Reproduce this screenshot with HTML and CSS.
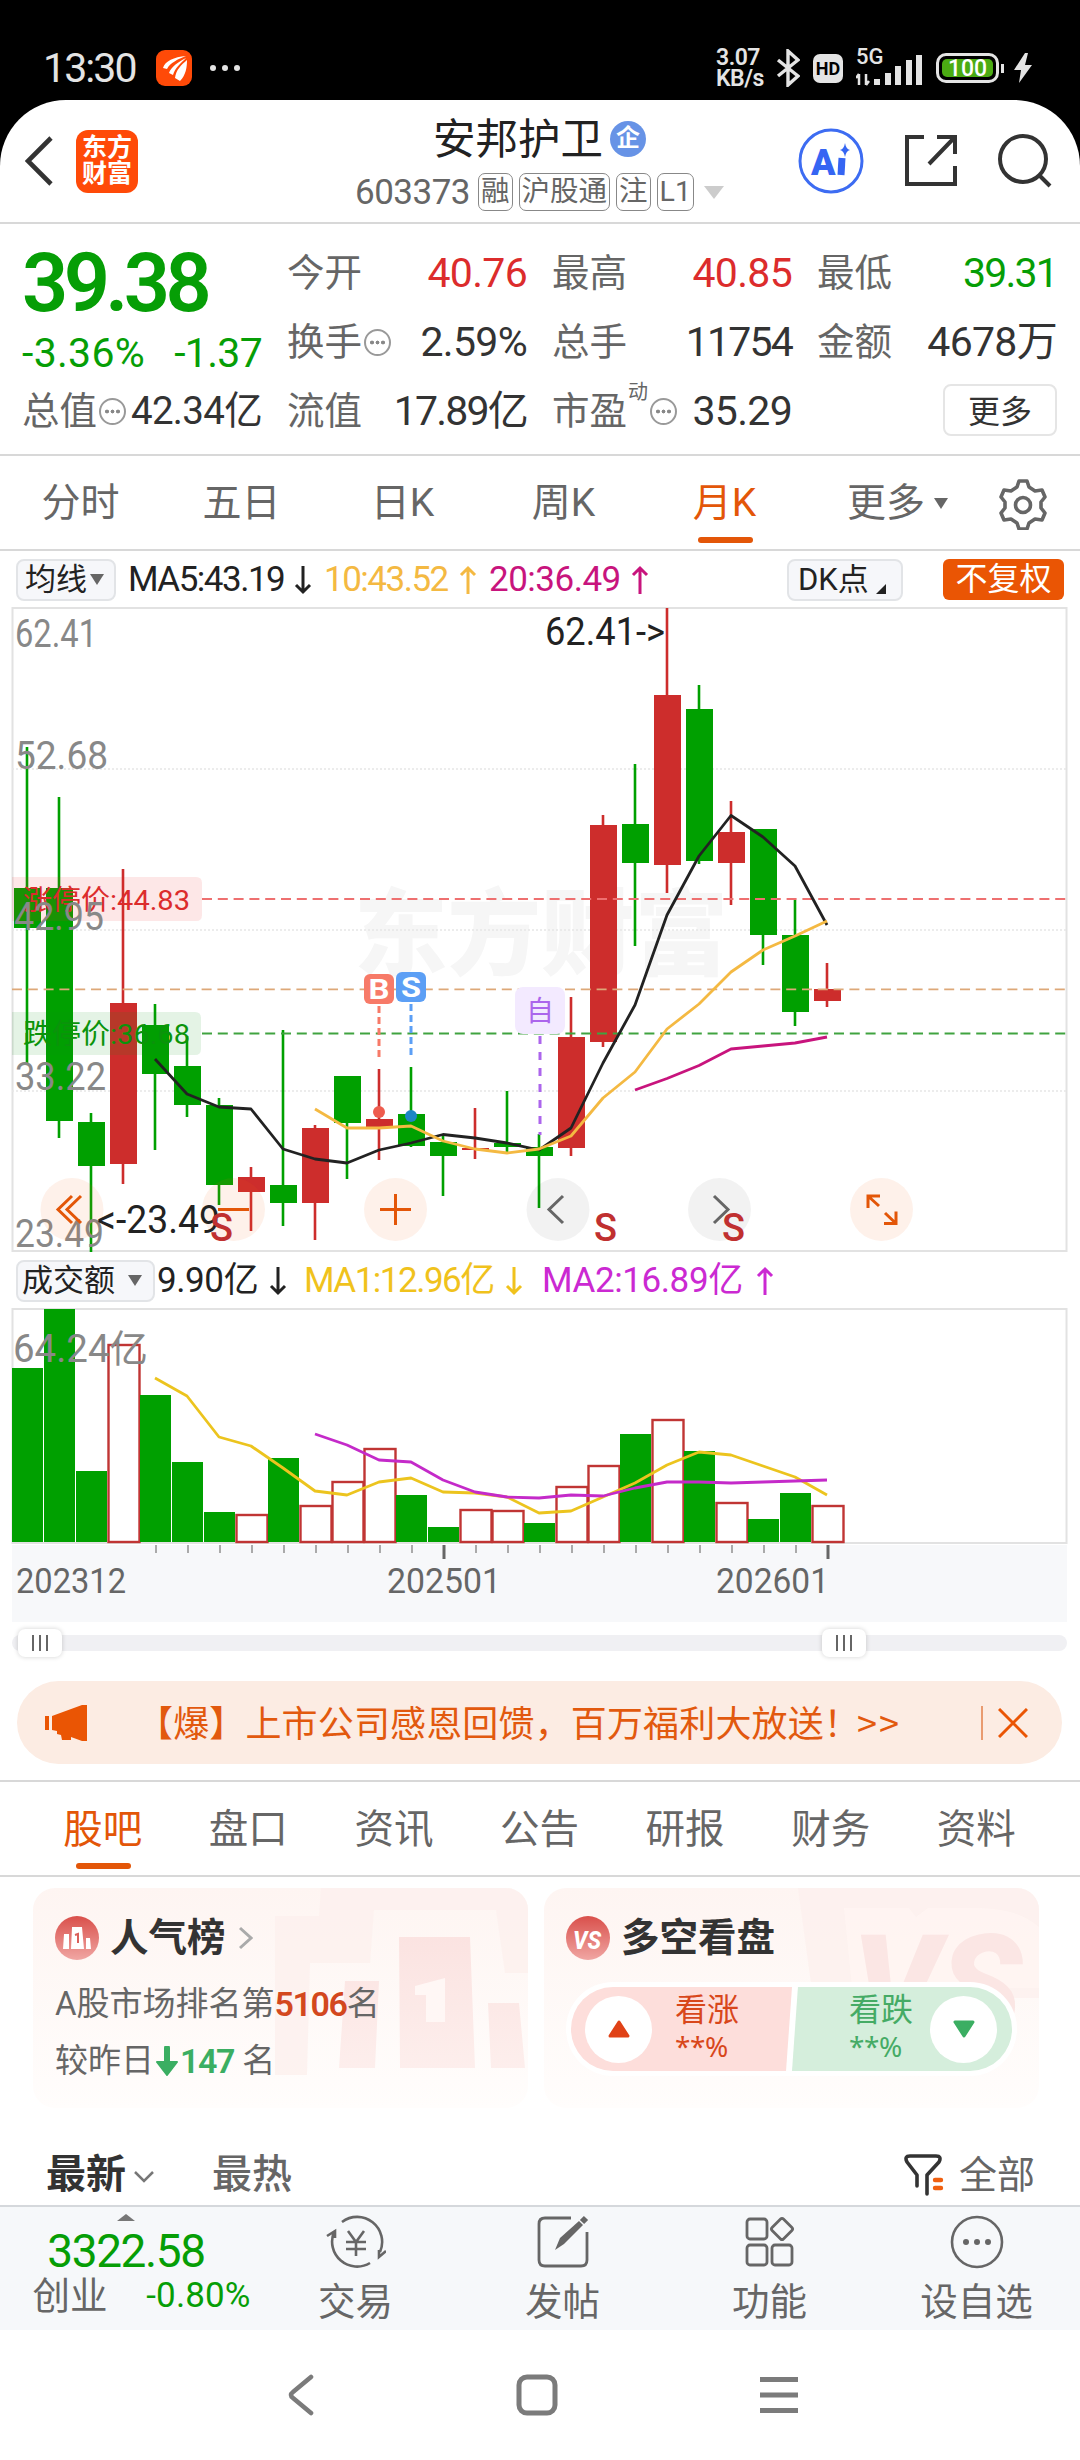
FILE: index.html
```html
<!DOCTYPE html>
<html lang="zh-CN">
<head>
    <meta charset="UTF-8">
    <meta name="viewport" content="width=device-width, initial-scale=1.0">
    <title>安邦护卫 603373</title>
    <link rel="stylesheet" href="styles.css">
</head>
<body>
    <!-- 状态栏 -->
    <div class="status">
        <span class="clock">13:30</span>
        <svg class="app-dot" width="36" height="36" viewBox="0 0 36 36"><rect width="36" height="36" rx="9" fill="#ff4a08"/><path d="M30 6C18 7 9 11 7 18l4 1C14 13 22 9 30 6zM30 8C22 12 15 17 13 23l4 2C19 18 25 13 30 8zM31 10C25 15 20 20 19 28l5 3C30 25 31 17 31 10z" fill="#fff"/></svg>
        <svg class="more-dots" width="32" height="8" viewBox="0 0 32 8" fill="#e4e4e4"><circle cx="4" cy="4" r="3"/><circle cx="16" cy="4" r="3"/><circle cx="28" cy="4" r="3"/></svg>
        <div class="status-right">
            <div class="speed"><span>3.07</span><span>KB/s</span></div>
            <svg class="bt" width="24" height="38" viewBox="0 0 24 38" fill="none" stroke="#e4e4e4" stroke-width="3.4"><path d="M2 11l20 16-10 9V2l10 9L2 27"/></svg>
            <span class="hd">HD</span>
            <div class="signal">
                <span class="net">5G</span>
                <svg width="66" height="36" viewBox="0 0 66 36"><path d="M3 35V24m0 0l-3 4M10 24v11m0 0l3-4" stroke="#e4e4e4" stroke-width="2.5" fill="none"/><path d="M18 29h6v6h-6zM29 23h6v12h-6zM39 16h6v19h-6zM50 10h6v25h-6zM60 5h6v30h-6z" fill="#e4e4e4"/></svg>
            </div>
            <div class="battery"><span>100</span></div>
            <svg class="bolt" width="18" height="30" viewBox="0 0 18 30"><path d="M11 0L0 17h7l-2 13L18 12h-7l3-12z" fill="#e4e4e4"/></svg>
        </div>
    </div>

    <div class="page">
        <!-- 顶部标题 -->
        <header class="header">
            <svg class="back" width="28" height="50" viewBox="0 0 28 50" fill="none" stroke="#333" stroke-width="4.6"><path d="M26 2L3 25l23 23"/></svg>
            <div class="logo">东方<br>财富</div>
            <div class="title">
                <div class="name">安邦护卫<span class="badge-qi">企</span></div>
                <div class="code"><span class="num">603373</span><i>融</i><i>沪股通</i><i>注</i><i>L1</i><b class="tri"></b></div>
            </div>
            <div class="header-icons">
                <svg width="66" height="66" viewBox="0 0 66 66"><circle cx="33" cy="33" r="31" fill="none" stroke="#3d6cf2" stroke-width="3"/><text x="13" y="47" class="ai">A</text><path d="M44 30l-1 17" stroke="#3565f3" stroke-width="7"/><path d="M47 15q1 6 5 7-4 1-5 7-1-6-5-7 4-1 5-7z" fill="#3565f3"/></svg>
                <svg width="54" height="54" viewBox="0 0 54 54" fill="none" stroke="#333" stroke-width="4"><path d="M20 3H3v47h48V32M33 3h18v17M51 3L25 30"/></svg>
                <svg width="54" height="54" viewBox="0 0 54 54" fill="none" stroke="#333" stroke-width="4"><circle cx="25" cy="25" r="23"/><path d="M42 42l10 10"/></svg>
            </div>
        </header>

        <!-- 行情 -->
        <section class="quote">
            <div class="quote-main">
                <div class="price green">39.38</div>
                <div class="change green"><span class="rate">-3.36%</span><span>-1.37</span></div>
                <div class="cell"><span class="lb">总值</span><b class="info"></b><span class="v">42.34亿</span></div>
            </div>
            <div class="quote-col">
                <div class="cell"><span class="lb">今开</span><span class="v red">40.76</span></div>
                <div class="cell"><span class="lb">换手</span><b class="info"></b><span class="v">2.59%</span></div>
                <div class="cell"><span class="lb">流值</span><span class="v tight">17.89亿</span></div>
            </div>
            <div class="quote-col">
                <div class="cell"><span class="lb">最高</span><span class="v red">40.85</span></div>
                <div class="cell"><span class="lb">总手</span><span class="v tight">11754</span></div>
                <div class="cell"><span class="lb">市盈</span><sup>动</sup><b class="info"></b><span class="v">35.29</span></div>
            </div>
            <div class="quote-col">
                <div class="cell"><span class="lb">最低</span><span class="v tight green">39.31</span></div>
                <div class="cell"><span class="lb">金额</span><span class="v">4678万</span></div>
                <div class="cell"><button class="more-btn">更多</button></div>
            </div>
        </section>

        <!-- 周期切换 -->
        <nav class="periods">
            <span>分时</span><span>五日</span><span>日K</span><span>周K</span><span class="on">月K</span><span class="with-arrow">更多<b></b></span>
            <svg width="48" height="52" viewBox="0 0 48 52" fill="none" stroke="#666" stroke-width="3.6" stroke-linejoin="round"><path d="M20 3h8l2 6 6 4 7-1 3 7-4 5v6l4 5-3 7-7-1-6 4-2 6h-8l-2-6-6-4-7 1-3-7 4-5v-6l-4-5 3-7 7 1 6-4z"/><circle cx="24" cy="27" r="7.5"/></svg>
        </nav>

        <!-- 均线图例 -->
        <div class="legend">
            <span class="chip chip-ma">均线<b></b></span>
            <span class="ma ma5">MA5:43.19</span><svg class="arr" viewBox="0 0 18 30"><path d="M9 1v26M2 20l7 7 7-7" stroke="#222"/></svg>
            <span class="ma ma10">10:43.52</span><svg class="arr" viewBox="0 0 18 30"><path d="M9 29V3M2 10l7-7 7 7" stroke="#f4b942"/></svg>
            <span class="ma ma20">20:36.49</span><svg class="arr" viewBox="0 0 18 30"><path d="M9 29V3M2 10l7-7 7 7" stroke="#c8147d"/></svg>
            <span class="chip chip-dk">DK点<b></b></span>
            <span class="chip-fq">不复权</span>
        </div>

        <svg id="kline" width="1080" height="646" viewBox="0 0 1080 646"></svg>

        <div class="legend legend-vol">
            <span class="chip chip-vol">成交额<b></b></span>
            <span class="ma vol">9.90亿</span><svg class="arr" viewBox="0 0 18 30"><path d="M9 1v26M2 20l7 7 7-7" stroke="#222"/></svg>
            <span class="ma vol1">MA1:12.96亿</span><svg class="arr" viewBox="0 0 18 30"><path d="M9 1v26M2 20l7 7 7-7" stroke="#f0c21c"/></svg>
            <span class="ma vol2">MA2:16.89亿</span><svg class="arr" viewBox="0 0 18 30"><path d="M9 29V3M2 10l7-7 7 7" stroke="#cb29d2"/></svg>
        </div>

        <svg id="volume" width="1080" height="316" viewBox="0 0 1080 316"></svg>

        <div class="range"><div class="track"><span class="handle"></span><span class="handle handle-end"></span></div></div>

        <!-- 公告条 -->
        <div class="banner">
            <svg width="44" height="38" viewBox="0 0 44 38" fill="#ea5504"><path d="M1 12h4v14H1zM8 12L38 1h5v36h-5l-11-4v3h-9l-1-5-4-1v-3l-5-1z"/></svg>
            <span class="banner-text">【爆】上市公司感恩回馈，百万福利大放送！<em>&gt;&gt;</em></span>
            <span class="banner-close"><svg width="30" height="30" viewBox="0 0 30 30" stroke="#ea5504" stroke-width="3"><path d="M1 1l28 28M29 1L1 29"/></svg></span>
        </div>

        <nav class="tabs">
            <span class="on">股吧</span><span>盘口</span><span>资讯</span><span>公告</span><span>研报</span><span>财务</span><span>资料</span>
        </nav>

        <section class="cards">
            <div class="card">
                <svg class="card-bg" width="496" height="220" viewBox="0 0 496 220">
                    <defs><linearGradient id="fade" x1="0" y1="0" x2="0" y2="1"><stop offset="0" stop-color="#fbe3e1"/><stop offset="1" stop-color="#fdeeec"/></linearGradient></defs>
                    <path d="M288 0h208v85h-24l-9-63H341l-4 53h-60l-3 112h-32V28h44z" fill="#fdf0ee" opacity=".8"/>
                    <path d="M361 49h76l5 131h-75l-1-131zM312 93h34l-4 87h-36zM455 115h31l6 65h-34z" fill="url(#fade)"/>
                    <path d="M382 98l30-8v44h-19v-27h-11z" fill="#fff7f5"/>
                </svg>
                <div class="card-title">
                    <svg width="44" height="44" viewBox="0 0 44 44"><defs><linearGradient id="dot" x1="0" y1="0" x2="0" y2="1"><stop offset="0" stop-color="#d9504b"/><stop offset="1" stop-color="#f0a6a3"/></linearGradient></defs><circle cx="22" cy="22" r="22" fill="url(#dot)"/><path d="M9 18h5v15H8zM17 11h10l2 22H16zM31 22h4l1 11h-5z" fill="#fff"/><path d="M20 19l3-1v9" stroke="#d9605b" stroke-width="2" fill="none"/></svg>
                    <strong>人气榜</strong>
                    <svg class="go" width="14" height="24" viewBox="0 0 14 24" fill="none" stroke="#aaa" stroke-width="3"><path d="M1 2l11 10L1 22"/></svg>
                </div>
                <p class="rank">A股市场排名第<b class="hot">5106</b>名</p>
                <p class="rank">较昨日<svg width="22" height="30" viewBox="0 0 22 30"><path d="M11 2v16" stroke="#3bae62" stroke-width="6" stroke-linecap="round"/><path d="M1 16h20L11 29z" fill="#3bae62" stroke="#3bae62" stroke-width="2" stroke-linejoin="round"/></svg><b class="down">147</b> 名</p>
            </div>
            <div class="card">
                <svg class="card-bg" width="496" height="220" viewBox="0 0 496 220">
                    <path d="M254 0h242v110H269z" fill="#fdf0ee" opacity=".8"/>
                    <path d="M300 20h65l7 9 12-9h50q40 0 62 20v60H308z" fill="#fff5f3" opacity=".8"/>
                    <text x="308" y="147" class="vs-bg" textLength="170" lengthAdjust="spacingAndGlyphs">VS</text>
                </svg>
                <div class="card-title">
                    <svg width="44" height="44" viewBox="0 0 44 44"><circle cx="22" cy="22" r="22" fill="url(#dot)"/><text x="7" y="33" class="vs" textLength="28" lengthAdjust="spacingAndGlyphs">VS</text></svg>
                    <strong>多空看盘</strong>
                </div>
                <div class="vote">
                    <div class="vote-up">
                        <span class="ball"><svg width="22" height="18" viewBox="0 0 22 18"><path d="M11 2l9 14H2z" fill="#e04217" stroke="#e04217" stroke-width="3" stroke-linejoin="round"/></svg></span>
                        <span class="vote-text">看涨<small>**%</small></span>
                    </div>
                    <div class="vote-down">
                        <span class="vote-text">看跌<small>**%</small></span>
                        <span class="ball"><svg width="22" height="18" viewBox="0 0 22 18"><path d="M11 16L2 2h18z" fill="#3bae62" stroke="#3bae62" stroke-width="3" stroke-linejoin="round"/></svg></span>
                    </div>
                </div>
            </div>
        </section>

        <div class="feed-bar">
            <strong>最新</strong>
            <svg class="chev" width="20" height="12" viewBox="0 0 20 12" fill="none" stroke="#777" stroke-width="2.5"><path d="M1 1l9 9 9-9"/></svg>
            <span class="hotest">最热</span>
            <svg class="filter" width="40" height="42" viewBox="0 0 40 42" fill="none" stroke-width="3.6" stroke-linecap="round" stroke-linejoin="round"><path d="M13 32V21L3 8q-3-6 3-6h26q6 0 3 6L23 21v19" stroke="#333"/><path d="M31 26h6M31 34h6" stroke="#f06010" stroke-width="4.4"/></svg>
            <span class="all">全部</span>
        </div>

        <!-- 底部工具栏 -->
        <footer class="toolbar">
            <div class="index">
                <b class="up-tri"></b>
                <div class="index-val green">3322.58</div>
                <div class="index-row"><span>创业</span><span class="green pct">-0.80%</span></div>
            </div>
            <div class="tool"><svg width="60" height="54" viewBox="0 0 60 54" fill="none" stroke="#666" stroke-width="2.6"><path d="M16 7a25 25 0 0 1 38 30M44 48A25 25 0 0 1 8 17M1 21l8-5 0 7M60 36l-7 6V35M22 16l8 11 8-11M30 27v14M20 27h20M20 34h20"/></svg>交易</div>
            <div class="tool"><svg width="52" height="54" viewBox="0 0 52 54" fill="none" stroke="#666" stroke-width="2.8"><path d="M34 3H8Q2 3 2 9v36q0 6 6 6h36q6 0 6-6V17"/><path d="M18 35l5-12L42 6l4 4-19 19z" fill="#666" stroke="none"/><path d="M45 7l4-4" stroke-width="6"/></svg>发帖</div>
            <div class="tool"><svg width="50" height="54" viewBox="0 0 50 54" fill="none" stroke="#666" stroke-width="2.8"><rect x="2" y="4" width="20" height="20" rx="3"/><rect x="2" y="30" width="20" height="20" rx="3"/><rect x="27" y="30" width="20" height="20" rx="3"/><rect x="29" y="6" width="16" height="16" rx="2" transform="rotate(45 37 14)"/></svg>功能</div>
            <div class="tool"><svg width="54" height="54" viewBox="0 0 54 54"><circle cx="27" cy="27" r="25" fill="none" stroke="#666" stroke-width="2.6"/><g fill="#666"><circle cx="16" cy="27" r="3"/><circle cx="27" cy="27" r="3"/><circle cx="38" cy="27" r="3"/></g></svg>设自选</div>
        </footer>

        <div class="sysnav">
            <svg width="28" height="42" viewBox="0 0 28 42" fill="none" stroke="#7b7b7b" stroke-width="4.6" stroke-linecap="round"><path d="M24 3L6 18q-4 3 0 6l18 15"/></svg>
            <svg width="42" height="42" viewBox="0 0 42 42" fill="none" stroke="#7b7b7b" stroke-width="5"><rect x="3" y="3" width="36" height="36" rx="8"/></svg>
            <svg width="40" height="38" viewBox="0 0 40 38" stroke="#7b7b7b" stroke-width="5"><path d="M1 3.5h38M1 19h38M1 34.5h38"/></svg>
        </div>
    </div>

    <script src="chart.js"></script>
</body>
</html>
```
FILE: styles.css
```css
* {
    box-sizing: border-box;
}

body {
    margin: 0;
    width: 1080px;
    background: #000;
    color: #333;
    font-family: Roboto, "Noto Sans CJK SC", sans-serif;
    font-size: 38px;
    line-height: 1;
}

svg {
    display: block;
    flex: none;
}

i, em {
    font-style: normal;
}

.green { color: #069e06; }
.red { color: #dc2c2c; }

/* 状态栏 */
.status {
    height: 100px;
    padding: 36px 48px 0 43px;
    display: flex;
    align-items: center;
    color: #e4e4e4;
}

.clock {
    width: 113px;
    font-size: 41px;
    letter-spacing: -1.9px;
}

.more-dots { margin-left: 17px; }

.status-right {
    margin-left: auto;
    display: flex;
    align-items: center;
}

.speed {
    width: 60px;
    display: flex;
    flex-direction: column;
    font-size: 23px;
    font-weight: 600;
    line-height: 21px;
    letter-spacing: -.5px;
}

.hd {
    width: 30px;
    height: 29px;
    margin: 0 13px;
    border-radius: 7px;
    background: #e4e4e4;
    color: #000;
    font-size: 18px;
    font-weight: 700;
    line-height: 30px;
    text-align: center;
}

.signal { position: relative; }

.net {
    position: absolute;
    left: 0;
    top: -4px;
    font-size: 22px;
    font-weight: 500;
}

.battery {
    position: relative;
    width: 63px;
    height: 30px;
    margin: 0 15px 0 14px;
    padding: 3px;
    border: 3px solid #e4e4e4;
    border-radius: 10px;
}

.battery span {
    display: block;
    height: 18px;
    border-radius: 5px;
    background: #4bab13;
    color: #fff;
    font-size: 23px;
    font-weight: 500;
    line-height: 19px;
    text-align: center;
}

.battery::after {
    content: "";
    position: absolute;
    right: -8px;
    top: 8px;
    width: 3px;
    height: 9px;
    background: #e4e4e4;
}

.page {
    height: 2360px;
    border-radius: 66px 66px 0 0;
    background: #fff;
    overflow: hidden;
}

/* 标题栏 */
.header {
    height: 124px;
    padding: 0 28px 0 25px;
    display: grid;
    grid-template-columns: 51px 62px 1fr 250px;
    align-items: center;
    border-bottom: 2px solid #d8d8d8;
}

.logo {
    width: 62px;
    height: 63px;
    padding-top: 5px;
    border-radius: 12px;
    background: #ff4a08;
    color: #fff;
    font-size: 25px;
    font-weight: 700;
    line-height: 26px;
    text-align: center;
}

.title {
    display: flex;
    flex-direction: column;
    align-items: center;
    padding: 14px 0 0 139px;
}

.name {
    display: flex;
    align-items: center;
    gap: 7px;
    height: 48px;
    font-size: 42.5px;
    color: #222;
}

.badge-qi {
    width: 36px;
    height: 36px;
    margin-top: -2px;
    border-radius: 50%;
    background: #6793e6;
    color: #fff;
    font-size: 24px;
    font-weight: 700;
    line-height: 34px;
    text-align: center;
}

.code {
    display: flex;
    align-items: center;
    gap: 6px;
    height: 56px;
    color: #666;
    font-size: 35px;
}

.code .num {
    letter-spacing: -.5px;
    margin-right: 2px;
}

.code i {
    height: 38px;
    padding: 0 2px;
    border: 1px solid #888;
    border-radius: 7px;
    font-size: 28.5px;
    line-height: 36px;
}

.tri {
    margin-left: 4px;
    border: 10px solid transparent;
    border-top: 13px solid #ccc;
    border-bottom: 0;
}

.header-icons {
    display: flex;
    align-items: center;
    justify-content: space-between;
    width: 254px;
    margin-left: -4px;
}

.ai {
    fill: #3565f3;
    font: 900 36px Roboto;
}

/* 行情数据 */
.quote {
    height: 232px;
    padding: 15px 25px 0 22px;
    display: grid;
    grid-template-columns: 240px 240px 240px 240px;
    column-gap: 25px;
    border-bottom: 2px solid #d8d8d8;
}

.quote-main {
    display: grid;
    grid-template-rows: 90px 48px 69px;
}

.quote-col {
    display: grid;
    grid-template-rows: 69px 69px 69px;
}

.price {
    font-size: 81px;
    font-weight: 600;
    letter-spacing: -4.6px;
    line-height: 90px;
}

.change {
    display: flex;
    justify-content: space-between;
    align-items: center;
    font-size: 41px;
    letter-spacing: -.7px;
}

.rate { letter-spacing: .3px; }

.cell {
    display: flex;
    align-items: center;
    white-space: nowrap;
}

.lb {
    color: #666;
    font-size: 37.5px;
}

.v {
    margin-left: auto;
    font-size: 41px;
    letter-spacing: -.7px;
}

.quote-col .v.tight { letter-spacing: -1.8px; }

.info {
    width: 27px;
    height: 27px;
    margin-left: 2px;
    border: 2px solid #999;
    border-radius: 50%;
    background: radial-gradient(circle at 6px 11.5px, #888 1.7px, transparent 2.2px), radial-gradient(circle at 11.5px 11.5px, #888 1.7px, transparent 2.2px), radial-gradient(circle at 17px 11.5px, #888 1.7px, transparent 2.2px);
}

sup {
    align-self: flex-start;
    margin: 5px 0 0 1px;
    color: #666;
    font-size: 20px;
}

.quote-main .v, .quote-main .lb { font-size: 37.5px; }
.quote-main .v { font-size: 38.5px; }

.more-btn {
    width: 114px;
    height: 52px;
    margin: 0 0 4px auto;
    padding: 0 0 3px;
    border: 2px solid #e5e5e5;
    border-radius: 8px;
    background: #fff;
    color: #333;
    font: 32px "Noto Sans CJK SC", sans-serif;
}

/* 周期 */
.periods {
    height: 95px;
    padding: 2px 33px 0 0;
    display: grid;
    grid-template-columns: repeat(5, 161px) 185px 1fr;
    align-items: center;
    border-bottom: 2px solid #d8d8d8;
    color: #666;
    font-size: 39px;
    text-align: center;
}

.periods svg { justify-self: end; }

.periods .on, .tabs .on {
    position: relative;
    color: #e35608;
}

.periods .on::after, .tabs .on::after {
    content: "";
    position: absolute;
    left: 50%;
    bottom: -20px;
    width: 55px;
    height: 6px;
    margin-left: -27px;
    border-radius: 3px;
    background: #e35608;
}

.with-arrow {
    display: flex;
    align-items: center;
    justify-content: center;
    gap: 9px;
}

.with-arrow b, .chip b {
    border: 7px solid transparent;
    border-top: 11px solid #666;
    border-bottom: 0;
}

/* 图例 */
.legend {
    height: 56px;
    padding: 1px 16px 0 16px;
    display: flex;
    align-items: center;
    white-space: nowrap;
}

.chip {
    height: 42px;
    padding: 0 7px;
    display: flex;
    align-items: center;
    border: 2px solid #e2e4e7;
    border-radius: 8px;
    background: #f6f7fa;
    color: #222;
    font-size: 31px;
}

.chip-ma { width: 100px; }
.chip-ma b { margin-left: 3px; }

.ma {
    margin: 0 10px 0 12px;
    font-size: 35px;
    letter-spacing: -1.5px;
    color: #222;
}

.ma5 { width: 156px; }
.ma10 { width: 126px; color: #f4b942; }

.legend .ma20 {
    width: 133px;
    color: #c8147d;
    letter-spacing: -.5px;
}

.arr {
    width: 18px;
    height: 30px;
    fill: none;
    stroke-width: 3;
}

.legend .ma10, .legend .ma20 { margin-left: 12px; margin-right: 9px; }

.chip-dk {
    width: 116px;
    margin-left: auto;
    padding-left: 9px;
}

.chip .chip-dk b, .chip-dk b {
    margin: 18px 0 0 7px;
    border: 5px solid transparent;
    border-right-color: #222;
    border-bottom: 5px solid #222;
}

.chip-fq {
    width: 121px;
    height: 41px;
    margin-left: 40px;
    border-radius: 6px;
    background: #ea5504;
    color: #fff;
    font-size: 32px;
    line-height: 40px;
    text-align: center;
}

.legend-vol { height: 55px; padding-top: 0; }
.chip-vol { width: 139px; padding-left: 4px; }
.chip-vol b { margin-left: 13px; }
.legend .vol { width: 102px; margin: 0 10px 0 2px; letter-spacing: -.4px; }
.vol1 { width: 192px; margin: 0 9px 0 17px; color: #f0c21c; }
.legend .vol2 { width: 205px; margin: 0 9px 0 19px; color: #cb29d2; letter-spacing: -.4px; }

#kline text, #volume text {
    font-family: Roboto, "Noto Sans CJK SC", sans-serif;
}

/* 区间滑块 */
.range {
    height: 57px;
    padding: 11px 13px 0 12px;
}

.track {
    height: 16px;
    padding: 0 201px 0 6px;
    display: flex;
    align-items: center;
    justify-content: space-between;
    border-radius: 8px;
    background: #f0f0f3;
}

.handle {
    width: 44px;
    height: 28px;
    border-radius: 7px;
    background: linear-gradient(#666, #666) 14px 6px / 2px 16px no-repeat, linear-gradient(#666, #666) 21px 6px / 2px 16px no-repeat, linear-gradient(#666, #666) 28px 6px / 2px 16px no-repeat, #fff;
    box-shadow: 0 0 5px rgba(0, 0, 0, .18);
}

/* 公告条 */
.banner {
    height: 83px;
    margin: 0 18px 16px 17px;
    padding: 0 34px 0 27px;
    display: flex;
    align-items: center;
    border-radius: 42px;
    background: #fcece3;
    color: #e2590e;
    font-size: 36px;
}

.banner-text {
    margin-left: 49px;
    letter-spacing: .15px;
    white-space: nowrap;
}

.banner-text em {
    margin-left: -3px;
    font-family: "Noto Sans CJK SC", sans-serif;
    letter-spacing: 2px;
}

.banner-close {
    margin-left: auto;
    padding: 2px 0 2px 15px;
    border-left: 2px solid #e99b70;
}

/* 栏目 */
.tabs {
    height: 97px;
    padding: 3px 31px 0 30px;
    display: grid;
    grid-template-columns: repeat(7, 1fr);
    align-items: center;
    border-top: 2px solid #d8d8d8;
    border-bottom: 2px solid #d8d8d8;
    color: #666;
    font-size: 39.5px;
    text-align: center;
}

.tabs .on::after { bottom: -19px; }

.cards {
    padding: 11px 41px 0 33px;
    display: flex;
    gap: 16px;
}

.card {
    position: relative;
    width: 495px;
    height: 220px;
    padding: 27px 22px 0;
    border-radius: 22px;
    background: linear-gradient(#fef5f2, #fffdfc);
    overflow: hidden;
}

.card-bg {
    position: absolute;
    left: 0;
    top: 0;
}

.card-title {
    position: relative;
    height: 46px;
    display: flex;
    align-items: center;
    font-size: 38.5px;
}

.card-title strong {
    margin: 0 13px 0 11px;
    font-weight: 600;
}

.rank {
    position: relative;
    height: 57px;
    margin: 0;
    padding-top: 14px;
    display: flex;
    align-items: center;
    color: #666;
    font-size: 33px;
    white-space: pre;
}

.card-title + .rank { margin-top: 7px; }

.rank b {
    font-size: 34px;
    font-weight: 600;
    letter-spacing: -1.4px;
}

.hot { color: #d3481e; }
.down { color: #3bae62; }
.rank svg { margin: 0 2px; }

.vs {
    fill: #fff;
    font: italic 800 25px Roboto;
}

.vs-bg {
    fill: #fbe6e4;
    font: italic 900 140px Roboto;
}

.vote {
    position: relative;
    width: 451px;
    height: 94px;
    margin: 21px 0 0;
    padding: 5px;
    display: flex;
    border-radius: 47px;
    background: #fff;
}

.vote-up, .vote-down {
    height: 84px;
    display: flex;
    align-items: center;
}

.vote-up {
    width: 221px;
    padding-left: 14px;
    border-radius: 42px 0 0 42px;
    background: #fddedb;
    color: #d8471b;
    clip-path: polygon(0 0, 100% 0, 97.3% 100%, 0 100%);
}

.vote-down {
    flex: 1;
    padding-left: 57px;
    border-radius: 0 42px 42px 0;
    background: #d5eedc;
    color: #45ab65;
    clip-path: polygon(2.7% 0, 100% 0, 100% 100%, 0 100%);
}

.ball {
    width: 67px;
    height: 67px;
    display: flex;
    align-items: center;
    justify-content: center;
    border-radius: 50%;
    background: #fff;
}

.vote-text {
    display: flex;
    flex-direction: column;
    gap: 5px;
    margin-top: -4px;
    font-size: 32px;
}

.vote-up .vote-text { margin-left: 23px; }
.vote-down .ball { margin-left: 17px; }

.vote-text small {
    font: 28px/30px "Noto Sans", sans-serif;
    letter-spacing: -.4px;
}

.feed-bar {
    height: 97px;
    padding: 37px 45px 0 46px;
    display: flex;
    align-items: center;
    font-size: 40px;
}

.feed-bar strong { font-weight: 600; }
.chev { margin: 4px 58px 0 8px; }
.hotest { color: #666; font-weight: 500; }

.all {
    margin-left: 15px;
    color: #666;
    font-size: 38px;
}

.filter { margin-left: auto; }

/* 底部 */
.toolbar {
    height: 125px;
    display: grid;
    grid-template-columns: 252px repeat(4, 207px);
    border-top: 2px solid #d5d8dc;
    background: #f6f8fa;
    color: #666;
}

.index {
    padding-top: 7px;
    display: flex;
    flex-direction: column;
    align-items: center;
}

.up-tri {
    border: 9px solid transparent;
    border-bottom: 7px solid #777;
    border-top: 0;
}

.index-val {
    margin-top: 11px;
    font-size: 46px;
    line-height: 38px;
    letter-spacing: -1.4px;
}

.index-row {
    width: 218px;
    margin: 8px 0 0 31px;
    display: flex;
    justify-content: space-between;
    font-size: 37.5px;
}

.pct {
    font-size: 35px;
    letter-spacing: .1px;
}

.tool {
    padding-top: 8px;
    display: flex;
    flex-direction: column;
    align-items: center;
    gap: 15px;
    font-size: 37.5px;
}

.sysnav {
    height: 130px;
    padding: 0 281px 0 287px;
    display: flex;
    align-items: center;
    justify-content: space-between;
}
```
FILE: chart.js
```js
const RED = '#cd2d2c';
const GREEN = '#00a000';
const STEP = 32;
const X0 = 27;

function add(svg, tag, attrs, text) {
    const el = document.createElementNS('http://www.w3.org/2000/svg', tag);
    for (const k in attrs) el.setAttribute(k, attrs[k]);
    if (text) el.textContent = text;
    svg.appendChild(el);
    return el;
}

function label(svg, text, x, y, width, color, size, weight) {
    const attrs = { x: x, y: y, fill: color, 'font-size': size, 'font-weight': weight || 400 };
    if (width) {
        attrs.textLength = width;
        attrs.lengthAdjust = 'spacingAndGlyphs';
    }
    add(svg, 'text', attrs, text);
}

function line(svg, x1, y1, x2, y2, color, width, dash) {
    add(svg, 'line', { x1: x1, y1: y1, x2: x2, y2: y2, stroke: color, 'stroke-width': width, 'stroke-dasharray': dash || 'none' });
}

// 折线, 从第 start 根K线开始
function curve(svg, start, ys, color) {
    const pts = ys.map((y, i) => (X0 + (start + i) * STEP) + ',' + y).join(' ');
    add(svg, 'polyline', { points: pts, fill: 'none', stroke: color, 'stroke-width': 2.8, 'stroke-linejoin': 'round' });
}

const k = document.getElementById('kline');

// [涨跌, 影线上, 影线下, 实体上, 实体下]
const candles = [
    [0, 140, 458, 281, 321], [0, 190, 531, 281, 514], [0, 506, 645, 515, 559], [1, 262, 577, 396, 557],
    [0, 397, 543, 418, 467], [0, 429, 510, 459, 498], [0, 491, 598, 498, 578], [1, 560, 624, 570, 585],
    [0, 423, 619, 578, 596], [1, 518, 633, 521, 596], [0, 469, 572, 469, 516], [1, 462, 553, 512, 520],
    [0, 460, 540, 507, 539], [0, 529, 589, 535, 549], [1, 501, 552, 541, 543], [0, 484, 545, 536, 540],
    [0, 527, 601, 540, 549], [1, 390, 549, 430, 541], [1, 208, 440, 218, 435], [0, 157, 339, 217, 256],
    [1, 1, 286, 88, 258], [0, 78, 257, 102, 254], [1, 194, 298, 225, 256], [0, 222, 358, 222, 328],
    [0, 293, 419, 328, 405], [1, 356, 400, 382, 394]
];

label(k, '东方财富', 354, 361, 374, '#f6f6f6', 94, 900);
add(k, 'rect', { x: 12.5, y: 1, width: 1054, height: 643, fill: 'none', stroke: '#e2e2e2', 'stroke-width': 2 });
[162, 323, 484].forEach(y => line(k, 12, y, 1067, y, '#e6e6e6', 1.5, '2 2'));

candles.forEach((c, i) => {
    const x = X0 + i * STEP;
    const color = c[0] ? RED : GREEN;
    line(k, x, c[1], x, c[2], color, 2.6);
    add(k, 'rect', { x: x - 13, y: c[3], width: 27, height: c[4] - c[3], fill: color });
});

// 涨跌停
line(k, 202, 292, 1067, 292, '#ee7070', 1.8, '10 5.8');
line(k, 12, 382.3, 1067, 382.3, '#dda878', 1.8, '10 5.8');
line(k, 202, 426.5, 1067, 426.5, '#40a340', 1.8, '10 5.8');
add(k, 'path', { d: 'M12 270h184q6 0 6 6v32q0 6-6 6H12z', fill: 'rgba(240,40,40,.11)' });
add(k, 'path', { d: 'M12 405h183q6 0 6 6v31q0 6-6 6H12z', fill: 'rgba(10,150,20,.11)' });

curve(k, 4, [452, 487, 500, 502, 542, 552, 556, 543, 536, 527.5, 531, 536, 543, 521, 456, 398, 308, 249, 208.5, 230, 259, 318], '#222');
curve(k, 9, [502, 521, 521, 519, 534, 542, 546, 542, 529, 491, 465, 422, 397, 365, 343, 329, 314], '#f4b942');
curve(k, 19, [483, 471.5, 458.5, 442, 439, 436, 430], '#c8147d');

label(k, '涨停价:44.83', 23, 303, 167, '#dc2c2c', 28);
label(k, '跌停价:36.68', 23, 437, 167, '#0b930b', 28);
label(k, '62.41', 15, 40, 82, '#888', 38);
label(k, '52.68', 15, 162, 93, '#888', 38);
label(k, '42.95', 14, 323, 90, '#888', 38);
label(k, '33.22', 15, 483, 91, '#888', 38);
label(k, '23.49', 15, 640, 89, '#888', 38);
label(k, '62.41->', 545, 38, 120, '#222', 38);

// 买卖点
line(k, 379, 399, 379, 451, '#f77a68', 3, '7 4');
line(k, 411, 397, 411, 449, '#5c9ff5', 3, '7 4');
line(k, 540, 429, 540, 528, '#ac65ec', 3, '8 8');
add(k, 'rect', { x: 364, y: 367, width: 30, height: 30, rx: 6, fill: '#f77a68' });
add(k, 'rect', { x: 396, y: 365, width: 30, height: 30, rx: 6, fill: '#5c9ff5' });
label(k, 'B', 368.5, 392, 21, '#fff', 28, 700);
label(k, 'S', 401, 390, 20, '#fff', 28, 700);
add(k, 'rect', { x: 515, y: 380, width: 50, height: 47, rx: 8, fill: '#f3eaff' });
label(k, '自', 526, 414, 28, '#ac65ec', 28);
add(k, 'circle', { cx: 379, cy: 505, r: 6, fill: '#ee5c4e' });
add(k, 'circle', { cx: 411, cy: 509, r: 6, fill: '#1d86c4' });

// 操作按钮
[[72, 1], [233.5, 1], [395.5, 1], [558, 0], [719.5, 0], [881.5, 1]].forEach(b => {
    add(k, 'circle', { cx: b[0], cy: 602.5, r: 31.5, fill: b[1] ? 'rgba(240,95,20,.09)' : 'rgba(0,0,0,.05)' });
});
function icon(d, color) {
    add(k, 'path', { d: d, fill: 'none', stroke: color, 'stroke-width': 3 });
}
icon('M72 589L58 602.500L72 616M81 589L67 602.500L81 616', '#e35608');
icon('M218 602.500H249', '#e35608');
icon('M380 602.500H411M395.500 587V618', '#e35608');
icon('M563 589L549 602.500L563 616', '#666');
icon('M714 589L728 602.500L714 616', '#666');
icon('M868 601V589H880M868 589L879 599M884 616.500H896V604.500M896 616.500L885 606', '#e35608');
label(k, '<-23.49', 97, 626, 123, '#222', 38);
[210, 594, 722].forEach(x => label(k, 'S', x, 634, 23, '#c03030', 39, 500));

// 成交额
const v = document.getElementById('volume');
const bars = [
    [0, 60], [0, 1], [0, 163], [1, 37], [0, 87], [0, 154], [0, 204], [1, 207], [0, 150], [1, 198], [1, 174], [1, 141], [0, 187],
    [0, 219], [1, 202], [1, 203], [0, 215], [1, 179], [1, 158], [0, 126], [1, 112], [0, 143], [1, 195], [0, 211], [0, 185], [1, 198]
];
add(v, 'rect', { x: 12, y: 237, width: 1055, height: 77, fill: '#f7f8fa' });
add(v, 'rect', { x: 12.5, y: 1, width: 1054, height: 234, fill: '#fff', stroke: '#e2e2e2', 'stroke-width': 2 });
bars.forEach((b, i) => {
    const x = 12 + i * STEP;
    if (b[0]) {
        add(v, 'rect', { x: x + 0.5, y: b[1], width: 31, height: 234 - b[1], fill: '#fff', stroke: '#c03534', 'stroke-width': 2.4 });
    } else {
        add(v, 'rect', { x: x, y: b[1], width: 31, height: 234 - b[1], fill: GREEN });
    }
});
curve(v, 4, [70, 88, 129, 138, 160, 183, 187, 174, 170, 184, 185, 189, 205, 203, 189, 175, 157, 144, 147, 158, 169, 187], '#ecc41e');
curve(v, 9, [126, 137, 152, 154, 172, 184, 189, 190, 187, 188, 180, 174, 174, 175, 174, 173, 172], '#c42ac9');
label(v, '64.24亿', 13, 54, 135, '#888', 38);

for (let i = 4; i < 26; i++) {
    const x = X0 + 1 + i * STEP;
    const major = i === 13 || i === 25;
    line(v, x, 237, x, major ? 251 : 245, major ? '#666' : '#aaa', major ? 3 : 2);
}
label(v, '202312', 16, 285, 110, '#666', 35);
label(v, '202501', 387, 285, 114, '#666', 35);
label(v, '202601', 716, 285, 113, '#666', 35);
```
